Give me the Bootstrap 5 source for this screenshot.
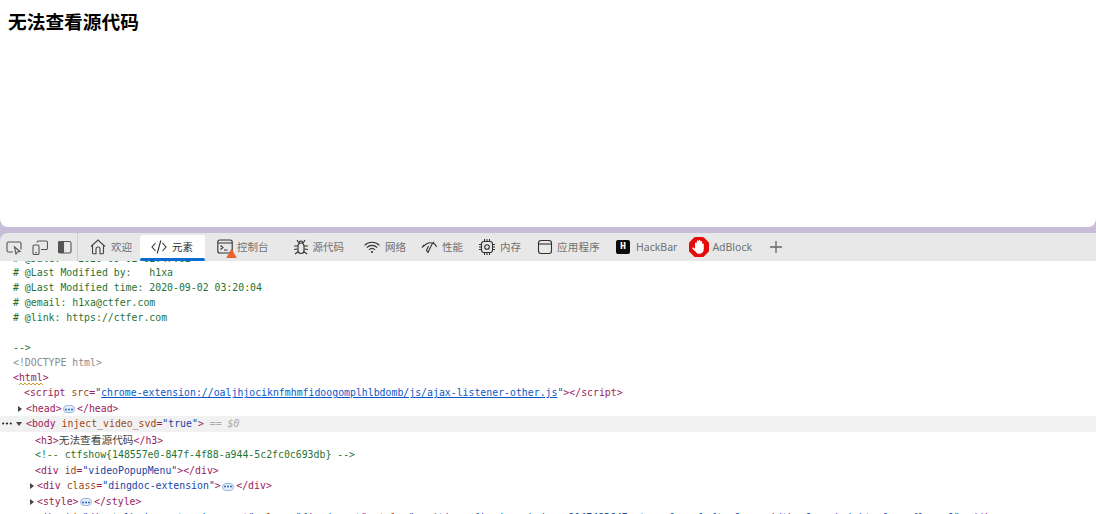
<!DOCTYPE html>
<html lang="zh">
<head>
<meta charset="utf-8">
<title>无法查看源代码</title>
<link href="https://cdn.jsdelivr.net/npm/bootstrap@5.3.0/dist/css/bootstrap.min.css" rel="stylesheet">
<style>
html,body{height:514px;overflow:hidden}
body{background:#c8bdd6;font-family:"Noto Sans CJK SC","Noto Sans",sans-serif}
.pagearea{height:227px;background:#fff;border-radius:0 0 8px 8px;padding:12px 8px 0}
.pagetitle{font:700 18.72px/18px "Noto Sans CJK SC",sans-serif;color:#000;margin:0}
.devbar{height:28px;margin-top:6px;background:#e8e8e8;border-radius:8px 0 0 0;position:relative;z-index:2}
.sideicons{padding-left:6px;gap:10px;width:78px;height:28px;flex:none;border-right:1px solid #cfcfcf}
.sideicons svg{width:16px;height:16px;margin-top:6px}
.dtab{height:28px;padding:0 8px;gap:4px;font-size:10.5px;color:#707070;white-space:nowrap;flex:none}
.dtab svg{width:16px;height:16px;flex:none;overflow:visible}
.dtab .adb{width:20px;height:20px}
.gap5{gap:5px}.gap6{gap:6px}.gap3{gap:3px}
.shift4{margin-left:4px}.shift8{margin-left:8px}.back1{margin-left:-1px}.back4{margin-left:-4px}
.spread{letter-spacing:.25px}
.dtab-active{position:relative;background:#fff;color:#2a2a2a;border-radius:3px 3px 0 0;height:26px;margin-top:2px;padding:0 0 3px 11px;width:65px;gap:5px}
.dtab-active::after{content:"";position:absolute;left:0;right:0;bottom:0;height:3px;background:#0a6cd0;border-radius:2px}
.dtab-en{font:10.5px "Noto Sans",sans-serif}
.sq-h{width:14px;height:14px;background:#0b0b0b;color:#fff;border-radius:2px;font:700 10px/14px "Liberation Mono",monospace;text-align:center;flex:none}
.codepane{height:253px;background:#fff;overflow:hidden;font-family:"DejaVu Sans Mono","Liberation Mono",monospace;font-size:9.86px;color:#9a1a5b}
.codeinner{margin-top:-10.200px}
.cl{height:15.500px;line-height:15.500px;white-space:pre;position:relative}
.cl15{height:15px;line-height:15px}
.first14{height:14px}
.lastrow{padding-top:1px}
.i13{padding-left:13px}.i24{padding-left:24px}.i26{padding-left:26px}.i35{padding-left:35px}.i37{padding-left:37px}
.cm{color:#1f7334}.dt{color:#8a8a8a}.an{color:#9b4a15}.av{color:#1b45a5}
.lk{color:#0b57c8;text-decoration:underline}.eq{color:#aaa;font-style:italic}
.cjk{font:10.7px "Noto Sans CJK SC",sans-serif;color:#444}
.sel{background:#f1f1f1}
.ell{display:inline-flex;align-items:center;justify-content:center;width:12px;height:8px;margin:0 2px 0 1.500px;background:#e6eefb;border:1px solid #9bb8e4;border-radius:4px;vertical-align:1px}
.ell svg{width:8px;height:3px;display:block}
.arr-r,.arr-d{position:absolute;width:0;height:0}
.arr-r{border-left:4px solid #444;border-top:3.500px solid transparent;border-bottom:3.500px solid transparent;top:5px}
.arr-d{border-top:4px solid #444;border-left:3.500px solid transparent;border-right:3.500px solid transparent;top:6px;left:16px}
.at18{left:18px}.at30{left:30px}
.dots3{position:absolute;left:2px;top:6px;width:10px;height:3px}
.squig{position:absolute;left:19px;top:12px;width:24px;height:4px}
</style>
</head>
<body>
<div class="pagearea"><h3 class="pagetitle">无法查看源代码</h3></div>

<div class="devbar d-flex">
  <div class="sideicons d-flex">
    <svg viewBox="0 0 16 16" fill="none" stroke="#555" stroke-width="1.100"><path d="M7 13H2.500A1.500 1.500 0 0 1 1 11.500V4.500A1.500 1.500 0 0 1 2.500 3h11A1.500 1.500 0 0 1 15 4.500v6"/><path d="M8.500 8l1.500 7 1.500-2 2.500-.5z" fill="#e8e8e8"/></svg>
    <svg viewBox="0 0 16 16" fill="none" stroke="#555" stroke-width="1.100"><path d="M5 3.500A1.500 1.500 0 0 1 6.500 2H14a1.500 1.500 0 0 1 1.500 1.500V9A1.500 1.500 0 0 1 14 10.500H9"/><rect x="1" y="6" width="6" height="9.500" rx="1.200"/><path d="M3.200 13.600h1.600"/></svg>
    <svg viewBox="0 0 16 16" fill="none" stroke="#555" stroke-width="1.100"><rect x=".5" y="2.500" width="12.500" height="11.500" rx="1.500"/><path d="M1 3h4.500v10.500H1z" fill="#555"/></svg>
  </div>
  <div class="dtab gap5 shift4 d-flex align-items-center">
    <svg viewBox="0 0 16 16" fill="none" stroke="#444" stroke-width="1.100"><path d="M1 7.500 8 1l7 6.500M2.500 6.500V14a.8.800 0 0 0 .8.800H6V10a2 2 0 0 1 4 0v4.800h2.700a.8.800 0 0 0 .8-.8V6.500"/></svg>
    <span>欢迎</span>
  </div>
  <div class="dtab dtab-active d-flex align-items-center">
    <svg viewBox="0 0 16 16" fill="none" stroke="#333" stroke-width="1.100"><path d="M4.500 4 1 8l3.500 4M11.500 4 15 8l-3.500 4M9.800 1.500 6.200 14.500"/></svg>
    <span>元素</span>
  </div>
  <div class="dtab shift4 d-flex align-items-center">
    <svg viewBox="0 0 16 16" fill="none" stroke="#333" stroke-width="1.100"><rect x=".8" y="1" width="14.400" height="13" rx="2"/><path d="M1 4h14M3.500 6.500l2.500 2-2.500 2M7 11h3.500"/><path d="M14.500 9.500 19.700 19H9.300z" fill="#e8622a" stroke="none"/></svg>
    <span>控制台</span>
  </div>
  <div class="dtab shift8 d-flex align-items-center">
    <svg viewBox="0 0 16 16" fill="none" stroke="#333" stroke-width="1.100"><rect x="5" y="4" width="6" height="10.500" rx="3"/><path d="M6 4.500C6 3 7 2 8 2s2 1 2 2.500M4 1l1.500 2.500M12 1l-1.500 2.500M1 7h4M15 7h-4M1 10.500l4-.5M15 10.500l-4-.5M2 15l3.200-2.500M14 15l-3.200-2.500"/></svg>
    <span>源代码</span>
  </div>
  <div class="dtab gap5 shift4 d-flex align-items-center">
    <svg viewBox="0 0 16 16" fill="none" stroke="#333" stroke-width="1.100"><path d="M.6 6.300C4.600 2.200 11.400 2.200 15.400 6.300M2.800 8.600c3-3 7.400-3 10.400 0M5 10.800c1.700-1.600 4.300-1.600 6 0"/><circle cx="8" cy="13" r="1.100" fill="#333" stroke="none"/></svg>
    <span>网络</span>
  </div>
  <div class="dtab gap5 back1 d-flex align-items-center">
    <svg viewBox="0 0 16 16" fill="none" stroke="#333" stroke-width="1.100"><path d="M.8 8.500 6 4.500c3-1.300 6-.8 8.200 1l1.300 2.500M3 7l-1-1M12 4l1-1M11.500 4 7 13.500l-1.500-2L7.500 7"/></svg>
    <span>性能</span>
  </div>
  <div class="dtab gap5 d-flex align-items-center">
    <svg viewBox="0 0 16 16" fill="none" stroke="#333" stroke-width="1.100"><rect x="2.500" y="2.500" width="11" height="11" rx="2.500"/><circle cx="8" cy="8" r="2.300"/><path d="M5.500 0v2.500M8 0v2.500M10.500 0v2.500M5.500 13.500V16M8 13.500V16M10.500 13.500V16M0 5.500h2.500M0 8h2.500M0 10.500h2.500M13.500 5.500H16M13.500 8H16M13.500 10.500H16"/></svg>
    <span>内存</span>
  </div>
  <div class="dtab d-flex align-items-center">
    <svg viewBox="0 0 16 16" fill="none" stroke="#333" stroke-width="1.100"><rect x="1.500" y="1.500" width="13" height="13" rx="2.500"/><path d="M1.500 5h13"/></svg>
    <span class="spread">应用程序</span>
  </div>
  <div class="dtab gap6 d-flex align-items-center">
    <span class="sq-h">H</span>
    <span class="dtab-en">HackBar</span>
  </div>
  <div class="dtab gap3 back4 d-flex align-items-center">
    <svg class="adb" viewBox="0 0 20 20"><path d="M6.500 0h7a2 2 0 0 1 1.400.6l4.500 4.500A2 2 0 0 1 20 6.500v7a2 2 0 0 1-.6 1.400l-4.500 4.500a2 2 0 0 1-1.400.6h-7a2 2 0 0 1-1.400-.6L.6 14.900A2 2 0 0 1 0 13.500v-7a2 2 0 0 1 .6-1.400L5.100.6A2 2 0 0 1 6.500 0z" fill="#e60a0a"/><path d="M6 12V6.500a.9.900 0 0 1 1.800 0V4.500a.9.900 0 0 1 1.800 0V4a.9.900 0 0 1 1.800 0v.8a.9.900 0 0 1 1.800 0v2.400a.8.800 0 0 1 1.600 0V12c0 3-2 4.800-4.400 4.800-2.100 0-3.100-1-4.100-2.600L3.400 11.800c-.6-1.100.9-1.800 1.800-.7z" fill="#fff"/></svg>
    <span class="dtab-en">AdBlock</span>
  </div>
  <div class="dtab d-flex align-items-center">
    <svg viewBox="0 0 16 16" fill="none" stroke="#666" stroke-width="1.300"><path d="M8 2v12M2 8h12"/></svg>
  </div>
</div>

<div class="codepane">
<div class="codeinner">
<div class="cl cl15 first14 i13 cm"># @Date:   2020-09-02 02:47:02</div>
<div class="cl cl15 i13 cm"># @Last Modified by:   h1xa</div>
<div class="cl cl15 i13 cm"># @Last Modified time: 2020-09-02 03:20:04</div>
<div class="cl cl15 i13 cm"># @email: h1xa@ctfer.com</div>
<div class="cl cl15 i13 cm"># @link: https://ctfer.com</div>
<div class="cl cl15"></div>
<div class="cl cl15 i13 cm">--&gt;</div>
<div class="cl cl15 i13 dt">&lt;!DOCTYPE html&gt;</div>
<div class="cl i13">&lt;html&gt;<svg class="squig" viewBox="0 0 24 4" fill="none" stroke="#d49a1c" stroke-width="1"><path d="M0 3l2-2 2 2 2-2 2 2 2-2 2 2 2-2 2 2 2-2 2 2 2-2 2 2"/></svg></div>
<div class="cl i24">&lt;script <span class="an">src</span>=<span class="av">"</span><span class="lk">chrome-extension://oaljhjociknfmhmfidoogomplhlbdomb/js/ajax-listener-other.js</span><span class="av">"</span>&gt;&lt;/script&gt;</div>
<div class="cl i26"><span class="arr-r at18"></span>&lt;head&gt;<span class="ell"><svg viewBox="0 0 8 3"><circle cx="1" cy="1.500" r="1" fill="#2a62c0"/><circle cx="4" cy="1.500" r="1" fill="#2a62c0"/><circle cx="7" cy="1.500" r="1" fill="#2a62c0"/></svg></span>&lt;/head&gt;</div>
<div class="cl i26 sel"><svg class="dots3" viewBox="0 0 10 3"><circle cx="1.200" cy="1.500" r="1.100" fill="#222"/><circle cx="5" cy="1.500" r="1.100" fill="#222"/><circle cx="8.800" cy="1.500" r="1.100" fill="#222"/></svg><span class="arr-d"></span>&lt;body <span class="an">inject_video_svd</span>=<span class="av">"true"</span>&gt; <span class="eq">== $0</span></div>
<div class="cl i35">&lt;h3&gt;<span class="cjk">无法查看源代码</span>&lt;/h3&gt;</div>
<div class="cl i35 cm">&lt;!-- ctfshow{148557e0-847f-4f88-a944-5c2fc0c693db} --&gt;</div>
<div class="cl i35">&lt;div <span class="an">id</span>=<span class="av">"videoPopupMenu"</span>&gt;&lt;/div&gt;</div>
<div class="cl i37"><span class="arr-r at30"></span>&lt;div <span class="an">class</span>=<span class="av">"dingdoc-extension"</span>&gt;<span class="ell"><svg viewBox="0 0 8 3"><circle cx="1" cy="1.500" r="1" fill="#2a62c0"/><circle cx="4" cy="1.500" r="1" fill="#2a62c0"/><circle cx="7" cy="1.500" r="1" fill="#2a62c0"/></svg></span>&lt;/div&gt;</div>
<div class="cl i37"><span class="arr-r at30"></span>&lt;style&gt;<span class="ell"><svg viewBox="0 0 8 3"><circle cx="1" cy="1.500" r="1" fill="#2a62c0"/><circle cx="4" cy="1.500" r="1" fill="#2a62c0"/><circle cx="7" cy="1.500" r="1" fill="#2a62c0"/></svg></span>&lt;/style&gt;</div>
<div class="cl lastrow i35">&lt;div <span class="an">id</span>=<span class="av">"dingtalk-doc-extension-root"</span> <span class="an">class</span>=<span class="av">"fixed-root"</span> <span class="an">style</span>=<span class="av">"position: fixed; z-index: 2147483647; top: 0px; left: 0px; width: 0px; height: 0px; flex: 0"</span>&gt;&lt;/div&gt;</div>
</div>
</div>
</body>
</html>
